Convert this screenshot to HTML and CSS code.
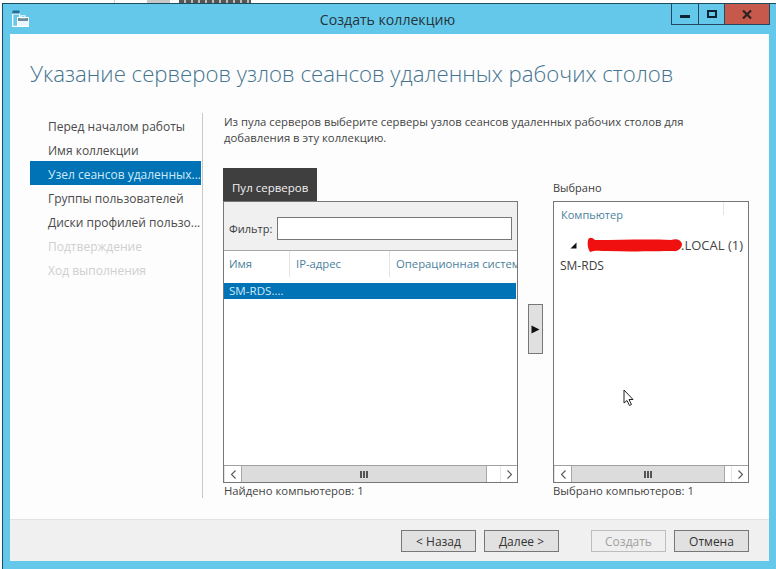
FILE: index.html
```html
<!DOCTYPE html>
<html lang="ru">
<head>
<meta charset="utf-8">
<title>Создать коллекцию</title>
<link rel="stylesheet" href="styles.css">
</head>
<body>
<div class="desktop">
  <div class="behind-top"><span class="behind-line"></span><span class="behind-block"></span><span class="behind-text"></span></div>
  <div class="window">
    <header class="titlebar">
      <svg class="app-icon" width="17" height="17" viewBox="0 0 17 17">
        <rect x="0.5" y="0.5" width="7" height="3.5" fill="#1f6f96"/>
        <path d="M0.7 4v12.3h15.6v-5.6h-2" fill="none" stroke="#fff" stroke-width="1.3"/>
        <path d="M0.7 4h7v3" fill="none" stroke="#fff" stroke-width="1.2"/>
        <rect x="5.5" y="7.5" width="10.8" height="8.5" fill="#e9f6fb" stroke="#fff"/>
        <rect x="6" y="8" width="10" height="3" fill="#6f8b99"/>
        <rect x="9" y="5.8" width="4" height="2" fill="none" stroke="#fff"/>
      </svg>
      <div class="title">Создать коллекцию</div>
      <div class="controls">
        <div class="ctl ctl-min"><span class="min-glyph"></span></div>
        <div class="ctl ctl-max"><span class="max-glyph"></span></div>
        <div class="ctl ctl-close">
          <svg width="10" height="9" viewBox="0 0 10 9"><path d="M1 .5l8 8M9 .5l-8 8" stroke="#2a2320" stroke-width="2.2" fill="none"/></svg>
        </div>
      </div>
    </header>
    <div class="client">
      <h1 class="heading">Указание серверов узлов сеансов удаленных рабочих столов</h1>
      <div class="body">
        <nav class="steps">
          <div class="step">Перед началом работы</div>
          <div class="step">Имя коллекции</div>
          <div class="step step-active">Узел сеансов удаленных...</div>
          <div class="step">Группы пользователей</div>
          <div class="step">Диски профилей пользо...</div>
          <div class="step step-off">Подтверждение</div>
          <div class="step step-off">Ход выполнения</div>
        </nav>
        <main class="main">
          <p class="intro">Из пула серверов выберите серверы узлов сеансов удаленных рабочих столов для добавления в эту коллекцию.</p>
          <div class="columns">
            <section class="pool">
              <div class="tab">Пул серверов</div>
              <div class="box">
                <div class="filter"><label class="filter-label">Фильтр:</label><div class="filter-input"></div></div>
                <div class="cols">
                  <div class="col col-name">Имя</div>
                  <div class="col col-ip">IP-адрес</div>
                  <div class="col col-os">Операционная систем</div>
                </div>
                <div class="row-selected">SM-RDS....</div>
                <div class="box-fill"></div>
                <div class="scrollbar">
                  <div class="sb-btn"><svg width="7" height="9" viewBox="0 0 7 9"><path d="M5.500 .5L1.500 4.500l4 4" fill="none" stroke="#555" stroke-width="1.100"/></svg></div>
                  <div class="sb-thumb sb-thumb-left"><span class="grip"></span></div>
                  <div class="sb-gap"></div>
                  <div class="sb-btn"><svg width="7" height="9" viewBox="0 0 7 9"><path d="M1.500 .5l4 4-4 4" fill="none" stroke="#555" stroke-width="1.100"/></svg></div>
                </div>
              </div>
              <div class="status status-pool">Найдено компьютеров: 1</div>
            </section>
            <div class="mover">
              <div class="move-btn"><svg width="9" height="9" viewBox="0 0 9 9"><path d="M0.500 0.500L8.500 4.500L0.500 8.500z" fill="#111"/></svg></div>
            </div>
            <section class="chosen">
              <div class="chosen-label">Выбрано</div>
              <div class="box">
                <div class="cols-right"><span class="col-computer">Компьютер</span><span class="col-sep"></span></div>
                <div class="group">
                  <svg class="twisty" width="7" height="7" viewBox="0 0 7 7"><path d="M6.500 0.500V6.500H0.500z" fill="#111"/></svg>
                  <svg class="scribble" width="96" height="16" viewBox="0 0 96 16"><path d="M1 3C0 7 1 12 3 15C8 13 12 14 20 14C45 15 70 14 86 14C91 15 95 11 95 7C94 3 90 1 84 3C60 2 35 3 8 3C5 0 2 0 1 3z" fill="#f01010"/></svg>
                  <span class="group-name">.LOCAL (1)</span>
                </div>
                <div class="tree-item">SM-RDS</div>
                <div class="box-fill"></div>
                <div class="scrollbar">
                  <div class="sb-btn"><svg width="7" height="9" viewBox="0 0 7 9"><path d="M5.500 .5L1.500 4.500l4 4" fill="none" stroke="#555" stroke-width="1.100"/></svg></div>
                  <div class="sb-thumb sb-thumb-right"><span class="grip"></span></div>
                  <div class="sb-gap"></div>
                  <div class="sb-btn"><svg width="7" height="9" viewBox="0 0 7 9"><path d="M1.500 .5l4 4-4 4" fill="none" stroke="#555" stroke-width="1.100"/></svg></div>
                </div>
              </div>
              <div class="status">Выбрано компьютеров: 1</div>
            </section>
          </div>
        </main>
      </div>
      <footer class="footer">
        <button class="btn">&lt; Назад</button>
        <button class="btn">Далее &gt;</button>
        <button class="btn btn-off btn-gap">Создать</button>
        <button class="btn">Отмена</button>
      </footer>
    </div>
  </div>
  <svg class="cursor" width="12" height="19" viewBox="0 0 12 19"><path d="M1 1V14L4 11.500L6.500 16.500L8.500 15.500L6 10.500H10z" fill="#fff" stroke="#222" stroke-width="1"/></svg>
</div>
</body>
</html>
```
FILE: styles.css
```css
* { box-sizing: border-box; }
html, body { margin: 0; padding: 0; }
body { width: 776px; height: 569px; overflow: hidden; background: #fdfdfd; font-family: "Open Sans", "Noto Sans", sans-serif; font-size: 12px; color: #3c3c3c; }
.desktop { position: relative; width: 776px; height: 569px; overflow: hidden; padding: 3px 0 0 2px; }
.behind-top { position: absolute; left: 0; top: 0; width: 776px; height: 3px; }
.behind-line { position: absolute; left: 114px; top: 0; width: 1px; height: 3px; background: #d0d0d0; }
.behind-block { position: absolute; left: 147px; top: 0; width: 23px; height: 3px; background: #c8c8c8; }
.behind-text { position: absolute; left: 179px; top: 0; width: 72px; height: 3px; background: repeating-linear-gradient(90deg, #555 0 5px, #bbb 5px 7px); }

.window { width: 774px; height: 566px; background: #63c8e9; border-top: 1px solid #1c4a60; border-left: 1px solid #1c4a60; display: flex; flex-direction: column; }
.titlebar { position: relative; height: 30px; flex: none; display: flex; align-items: center; justify-content: center; }
.app-icon { position: absolute; left: 9px; top: 6px; }
.title { font-size: 14.100px; color: #26343c; padding-top: 1px; padding-right: 4px; }
.controls { position: absolute; top: 0; right: 6px; display: flex; height: 21px; }
.ctl { height: 21px; display: flex; align-items: center; justify-content: center; border: 1px solid #23485f; border-top: 0; }
.ctl-min { width: 28px; }
.ctl-max { width: 26px; border-left: 0; }
.ctl-close { width: 45px; border-left: 0; background: #c6584c; }
.min-glyph { width: 10px; height: 3px; background: #0e2233; margin-top: 5px; }
.max-glyph { width: 10px; height: 8px; border: 2px solid #0e2233; }

.client { flex: 1; margin: 0 7px 8px 7px; background: #fdfdfd; display: flex; flex-direction: column; min-height: 0; }
.heading { margin: 0; padding: 24px 0 0 20px; height: 78px; flex: none; font-weight: 300; font-size: 22.200px; line-height: 32px; color: #44748f; white-space: nowrap; }
.body { flex: 1; display: flex; min-height: 0; padding: 0 20px; }
.steps { width: 173px; flex: none; border-right: 1px solid #c9c9c9; margin-top: 1px; height: 385px; }
.step { height: 24px; line-height: 24px; padding: 2px 0 0 18px; white-space: nowrap; overflow: hidden; width: 171px; color: #4a4a4a; }
.step-active { background: #0072b6; color: #cfeaf7; }
.step-off { color: #cfcfcf; }
.main { flex: 1; padding-left: 20px; display: flex; flex-direction: column; min-width: 0; }
.intro { margin: 0; padding: 2px 0 0 1px; height: 56px; width: 480px; font-size: 11.300px; line-height: 16px; color: #444; }
.columns { display: flex; flex: none; height: 332px; }
.pool { width: 295px; flex: none; display: flex; flex-direction: column; }
.tab { width: 94px; height: 33px; background: #3f3f3f; color: #f2f2f2; padding: 12px 0 0 9px; line-height: 16px; flex: none; font-size: 11.500px; }
.box { height: 282px; flex: none; border: 1px solid #777; background: #fff; display: flex; flex-direction: column; }
.filter { height: 49px; flex: none; background: #f0f0f0; border-bottom: 1px solid #a8a8a8; display: flex; align-items: center; padding: 4px 5px 0 5px; }
.filter-label { width: 48px; flex: none; font-size: 11px; }
.filter-input { width: 235px; height: 23px; background: #fff; border: 1px solid #777; }
.cols { height: 26px; flex: none; display: flex; color: #4a7f9d; margin-bottom: 6px; font-size: 11.300px; }
.col { border-right: 1px solid #e4e4e4; padding-left: 5px; line-height: 26px; white-space: nowrap; overflow: hidden; }
.col-name { width: 66px; }
.col-ip { width: 100px; padding-left: 6px; }
.col-os { flex: 1; border-right: 0; padding-left: 6px; }
.row-selected { height: 16px; flex: none; background: #0072b6; color: #cfeaf7; padding-left: 5px; line-height: 16px; margin-right: 1px; font-size: 11.600px; }
.box-fill { flex: 1; }
.scrollbar { height: 17px; flex: none; display: flex; border-top: 1px solid #a0a0a0; background: #fff; }
.sb-btn { width: 17px; flex: none; display: flex; align-items: center; justify-content: center; border-left: 1px solid #e4e4e4; }
.sb-thumb { background: #dcdcdc; border-left: 1px solid #a8a8a8; border-right: 1px solid #a8a8a8; display: flex; align-items: center; justify-content: center; }
.sb-thumb-left { width: 246px; }
.sb-thumb-right { width: 154px; }
.sb-gap { flex: 1; }
.grip { width: 8px; height: 7px; background: repeating-linear-gradient(90deg, #555 0 2px, transparent 2px 3px); }
.status { font-size: 11.300px; line-height: 16px; color: #444; }
.status-pool { padding-left: 1px; }
.mover { width: 35px; flex: none; padding: 136px 0 0 10px; }
.move-btn { width: 15px; height: 50px; background: #e0e0e0; border: 1px solid #777; display: flex; align-items: center; justify-content: center; }
.chosen { width: 196px; flex: none; display: flex; flex-direction: column; }
.chosen-label { height: 33px; padding-top: 12px; line-height: 16px; flex: none; font-size: 11px; }
.cols-right { height: 26px; flex: none; padding-left: 7px; line-height: 26px; color: #4a7f9d; position: relative; font-size: 11px; display: flex; justify-content: space-between; }
.col-sep { width: 1px; height: 13px; margin-right: 24px; background: #e4e4e4; }
.group { height: 24px; flex: none; margin-top: 5px; display: flex; align-items: center; white-space: nowrap; font-size: 13px; }
.twisty { margin-left: 16px; flex: none; }
.scribble { margin-left: 10px; margin-right: -2px; flex: none; }
.group-name { color: #444; }
.tree-item { padding: 1px 0 0 6px; line-height: 16px; }

.footer { height: 42px; flex: none; background: #f0f0f0; border-top: 1px solid #e2e2e2; display: flex; align-items: flex-start; padding: 10px 20px 0 0; justify-content: flex-end; gap: 8px; }
.btn { width: 75px; height: 22px; padding: 0; background: #e1e1e1; border: 1px solid #777; font: inherit; font-size: 12px; color: #333; line-height: 19px; }
.btn-off { background: #efefef; border-color: #bdbdbd; color: #a0a0a0; }
.btn-gap { margin-left: 24px; }

.cursor { position: absolute; left: 623px; top: 389px; }
```
